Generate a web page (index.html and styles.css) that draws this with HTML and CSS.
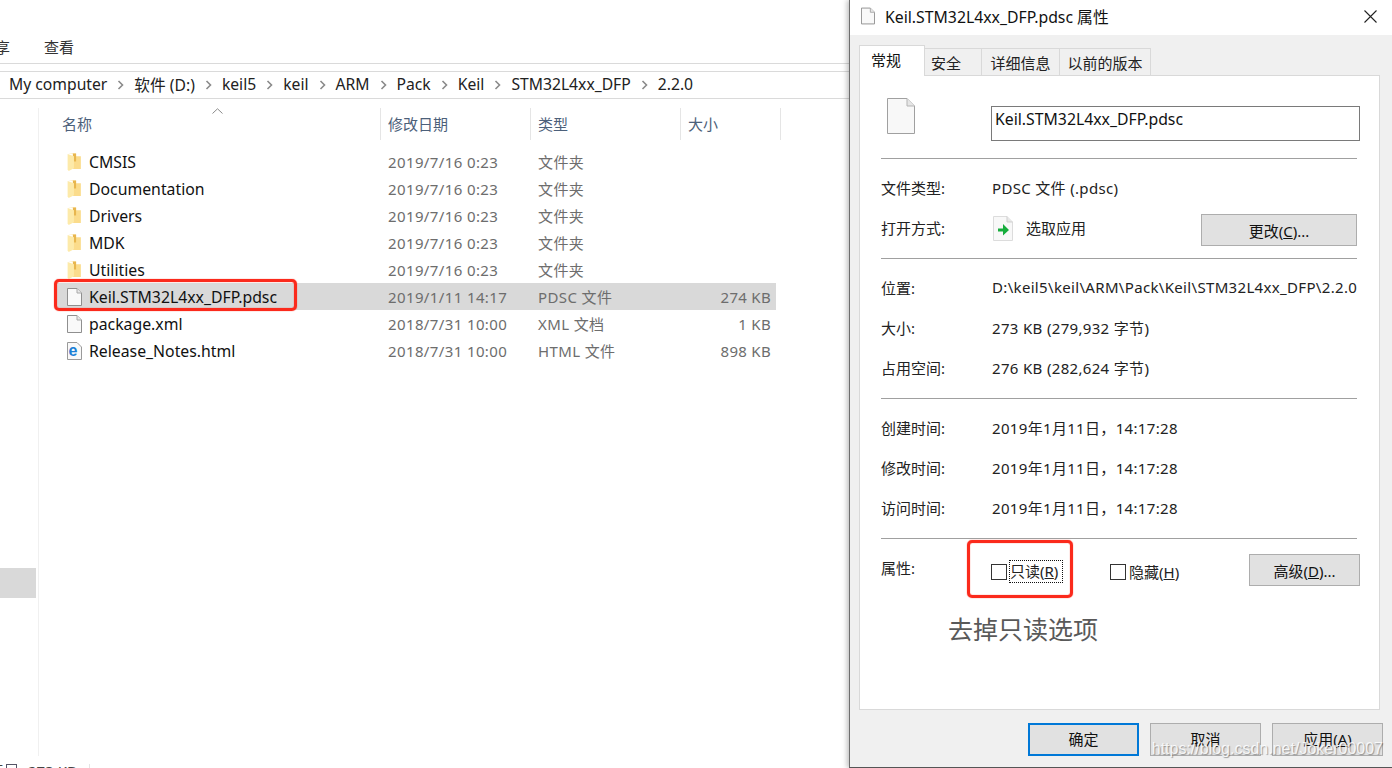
FILE: index.html
```html
<!DOCTYPE html>
<html lang="zh-CN">
<head>
    <meta charset="UTF-8">
    <title>Keil.STM32L4xx_DFP.pdsc 属性</title>
    <link rel="stylesheet" href="styles.css">
</head>
<body>

    <svg class="defs" width="0" height="0">
        <defs>
            <symbol id="folder" viewBox="0 0 13 17">
                <path d="M0.5 0.5 H8 V3 H12.5 V15 H5 V1 Z" fill="#fbdc8c"/>
                <path d="M5 0.5 H8 V8 H5 Z" fill="#e8b64e"/>
                <path d="M0 1 L6 3 V14.5 L1 17 L0 15.5 Z" fill="#fdeaa9"/>
            </symbol>
            <symbol id="page" viewBox="0 0 15 18">
                <path d="M0.5 0.5 H10 L14.5 5 V17.5 H0.5 Z" fill="#f9f9f9" stroke="#8f8f8f"/>
                <path d="M10 0.5 V5 H14.5" fill="#e8e8e8" stroke="#a8a8a8"/>
            </symbol>
            <symbol id="crumb" viewBox="0 0 7 10">
                <path d="M1.5 1 L5.5 5 L1.5 9" fill="none" stroke="#8a8a8a" stroke-width="1.6"/>
            </symbol>
        </defs>
    </svg>

    <div class="desktop">

        <!-- Explorer window -->
        <div class="explorer">
            <div class="ribbon">
                <span class="ribbon-tab ribbon-cut">享</span>
                <span class="ribbon-tab">查看</span>
            </div>

            <div class="address">
                <span>My computer</span>
                <svg class="crumb"><use href="#crumb"/></svg>
                <span>软件 (D:)</span>
                <svg class="crumb"><use href="#crumb"/></svg>
                <span>keil5</span>
                <svg class="crumb"><use href="#crumb"/></svg>
                <span>keil</span>
                <svg class="crumb"><use href="#crumb"/></svg>
                <span>ARM</span>
                <svg class="crumb"><use href="#crumb"/></svg>
                <span>Pack</span>
                <svg class="crumb"><use href="#crumb"/></svg>
                <span>Keil</span>
                <svg class="crumb"><use href="#crumb"/></svg>
                <span>STM32L4xx_DFP</span>
                <svg class="crumb"><use href="#crumb"/></svg>
                <span>2.2.0</span>
            </div>

            <div class="browser">
                <div class="nav-pane">
                    <div class="nav-selected"></div>
                </div>

                <div class="files">
                    <div class="file-head">
                        <div class="head-cell head-name">名称
                            <svg class="sort-caret" width="11" height="6" viewBox="0 0 11 6"><path d="M0.5 5.5 L5.5 0.8 L10.5 5.5" fill="none" stroke="#8a8a8a"/></svg>
                        </div>
                        <div class="head-cell">修改日期</div>
                        <div class="head-cell">类型</div>
                        <div class="head-cell head-size">大小</div>
                    </div>

                    <div class="file-list">
                        <div class="file-row">
                            <svg class="file-icon"><use href="#folder"/></svg>
                            <span class="file-name">CMSIS</span><span class="file-meta">2019/7/16 0:23</span><span class="file-meta">文件夹</span><span class="file-size"></span>
                        </div>
                        <div class="file-row">
                            <svg class="file-icon"><use href="#folder"/></svg>
                            <span class="file-name">Documentation</span><span class="file-meta">2019/7/16 0:23</span><span class="file-meta">文件夹</span><span class="file-size"></span>
                        </div>
                        <div class="file-row">
                            <svg class="file-icon"><use href="#folder"/></svg>
                            <span class="file-name">Drivers</span><span class="file-meta">2019/7/16 0:23</span><span class="file-meta">文件夹</span><span class="file-size"></span>
                        </div>
                        <div class="file-row">
                            <svg class="file-icon"><use href="#folder"/></svg>
                            <span class="file-name">MDK</span><span class="file-meta">2019/7/16 0:23</span><span class="file-meta">文件夹</span><span class="file-size"></span>
                        </div>
                        <div class="file-row">
                            <svg class="file-icon"><use href="#folder"/></svg>
                            <span class="file-name">Utilities</span><span class="file-meta">2019/7/16 0:23</span><span class="file-meta">文件夹</span><span class="file-size"></span>
                        </div>
                        <div class="file-row selected">
                            <svg class="file-icon"><use href="#page"/></svg>
                            <span class="file-name">Keil.STM32L4xx_DFP.pdsc</span><span class="file-meta">2019/1/11 14:17</span><span class="file-meta">PDSC 文件</span><span class="file-size">274 KB</span>
                        </div>
                        <div class="file-row">
                            <svg class="file-icon"><use href="#page"/></svg>
                            <span class="file-name">package.xml</span><span class="file-meta">2018/7/31 10:00</span><span class="file-meta">XML 文档</span><span class="file-size">1 KB</span>
                        </div>
                        <div class="file-row">
                            <svg class="file-icon" viewBox="0 0 15 18">
                                <path d="M0.5 0.5 H10 L14.5 5 V17.5 H0.5 Z" fill="#f9f9f9" stroke="#9a9a9a"/>
                                <text x="1.5" y="14" class="ie-glyph">e</text>
                            </svg>
                            <span class="file-name">Release_Notes.html</span><span class="file-meta">2018/7/31 10:00</span><span class="file-meta">HTML 文件</span><span class="file-size">898 KB</span>
                        </div>
                    </div>
                </div>
            </div>

            <div class="status-bar">
                <span class="status-cut">项</span>
                <span class="status-box"></span>
                <span class="status-size">273 KB</span>
            </div>

            <div class="red-frame frame-file"></div>
        </div>

        <!-- Properties dialog -->
        <div class="dialog">
            <div class="title-bar">
                <svg class="title-icon"><use href="#page"/></svg>
                <span class="title-text">Keil.STM32L4xx_DFP.pdsc 属性</span>
                <svg class="close-x" width="13" height="13" viewBox="0 0 13 13"><path d="M0.5 0.5 L12.5 12.5 M12.5 0.5 L0.5 12.5" stroke="#222" stroke-width="1.1"/></svg>
            </div>

            <div class="dialog-body">
                <div class="tabs">
                    <div class="tab active">常规</div>
                    <div class="tab tab-safe">安全</div>
                    <div class="tab tab-detail">详细信息</div>
                    <div class="tab tab-prev">以前的版本</div>
                </div>

                <div class="panel">
                    <div class="name-block">
                        <svg class="big-page" viewBox="0 0 28 36"><path d="M0.5 0.5 H20 L27.5 8 V35.5 H0.5 Z" fill="#f8f8f8" stroke="#a0a0a0"/><path d="M20 0.5 V8 H27.5" fill="#e6e6e6" stroke="#b4b4b4"/></svg>
                        <div class="name-input">Keil.STM32L4xx_DFP.pdsc</div>
                    </div>

                    <div class="prop-section">
                        <div class="prop-row"><span>文件类型:</span><span class="prop-value">PDSC 文件 (.pdsc)</span></div>
                        <div class="prop-row">
                            <span>打开方式:</span>
                            <div class="open-with">
                                <svg class="open-icon" width="20" height="25" viewBox="0 0 20 25">
                                    <path d="M0.5 0.5 H14 L19.5 6 V24.5 H0.5 Z" fill="#f8f8f8" stroke="#dcdcdc"/>
                                    <path d="M14 0.5 V6 H19.5" fill="#e8e8e8" stroke="#cfcfcf"/>
                                    <path d="M5 12.5 H10 V8 L16 14 L10 19.5 V15.5 H5 Z" fill="#16ad3c"/>
                                </svg>
                                <span>选取应用</span>
                                <button class="win-btn change-btn">更改(<u>C</u>)...</button>
                            </div>
                        </div>
                    </div>

                    <div class="prop-section">
                        <div class="prop-row"><span>位置:</span><span class="prop-value">D:\keil5\keil\ARM\Pack\Keil\STM32L4xx_DFP\2.2.0</span></div>
                        <div class="prop-row"><span>大小:</span><span class="prop-value">273 KB (279,932 字节)</span></div>
                        <div class="prop-row"><span>占用空间:</span><span class="prop-value">276 KB (282,624 字节)</span></div>
                    </div>

                    <div class="prop-section">
                        <div class="prop-row"><span>创建时间:</span><span class="prop-value">2019年1月11日，14:17:28</span></div>
                        <div class="prop-row"><span>修改时间:</span><span class="prop-value">2019年1月11日，14:17:28</span></div>
                        <div class="prop-row"><span>访问时间:</span><span class="prop-value">2019年1月11日，14:17:28</span></div>
                    </div>

                    <div class="attr-section">
                        <span class="attr-label">属性:</span>
                        <span class="check-box first-check"></span>
                        <span class="check-text focused">只读(<u>R</u>)</span>
                        <span class="check-box second-check"></span>
                        <span class="check-text">隐藏(<u>H</u>)</span>
                        <button class="win-btn advanced-btn">高级(<u>D</u>)...</button>
                    </div>

                    <div class="note">去掉只读选项</div>
                </div>

                <div class="dialog-actions">
                    <button class="win-btn action-btn default-btn">确定</button>
                    <button class="win-btn action-btn">取消</button>
                    <button class="win-btn action-btn">应用(<u>A</u>)</button>
                </div>
            </div>

            <div class="red-frame frame-check"></div>
            <div class="watermark">https://blog.csdn.net/Joker00007</div>
        </div>
    </div>

</body>
</html>
```

FILE: styles.css
```css
* {
    box-sizing: border-box;
}

body {
    margin: 0;
    width: 1392px;
    height: 768px;
    overflow: hidden;
    background: #fff;
    font-family: "Noto Sans", "Noto Sans CJK SC", sans-serif;
    font-size: 15px;
    color: #1a1a1a;
}

.defs {
    position: absolute;
}

.desktop {
    display: flex;
    height: 768px;
}

/* Explorer */
.explorer {
    position: relative;
    width: 849px;
    height: 768px;
    overflow: hidden;
    flex: none;
}

.ribbon {
    display: flex;
    height: 64px;
    padding-top: 36px;
    border-bottom: 1px solid #dadada;
    line-height: 22px;
}

.ribbon-tab {
    font-size: 15px;
    color: #333;
}

.ribbon-cut {
    width: 49px;
    margin-left: -5px;
    padding-right: 5px;
}

.address {
    display: flex;
    align-items: center;
    height: 28px;
    margin-top: 7px;
    padding: 0 0 2px 9px;
    border-top: 1px solid #dadada;
    border-bottom: 1px solid #dadada;
    font-size: 15.7px;
    color: #222;
    white-space: nowrap;
}

.crumb {
    width: 7px;
    height: 10px;
    margin: 2px 10px 0;
    flex: none;
}

.browser {
    display: flex;
    height: 657px;
    padding-top: 9px;
}

.nav-pane {
    width: 39px;
    padding-top: 460px;
    border-right: 1px solid #f0f0f0;
    flex: none;
}

.nav-selected {
    width: 36px;
    height: 30px;
    background: #d9d9d9;
}

.files {
    padding-left: 16px;
}

.file-head {
    display: flex;
    height: 32px;
    margin-bottom: 8px;
}

.head-cell {
    position: relative;
    width: 150px;
    padding: 5px 0 0 7px;
    border-right: 1px solid #e5e5e5;
    font-size: 15px;
    color: #4c607a;
}

.head-name {
    width: 326px;
}

.head-size {
    width: 100px;
}

.sort-caret {
    position: absolute;
    left: 157px;
    top: 0;
}

.file-row {
    display: grid;
    grid-template-columns: 22px 299px 150px 150px 83px;
    align-items: center;
    width: 719px;
    height: 27px;
    margin-left: 2px;
    padding-left: 10px;
}

.file-row.selected {
    background: #d9d9d9;
}

.file-icon {
    width: 15px;
    height: 18px;
}

.file-name {
    font-size: 15.8px;
    color: #111;
    white-space: nowrap;
}

.file-meta {
    letter-spacing: 0.38px;
    color: #6d6d6d;
    white-space: nowrap;
}

.file-size {
    letter-spacing: 0.3px;
    color: #6d6d6d;
    text-align: right;
    white-space: nowrap;
}

.ie-glyph {
    font-family: "Liberation Sans", sans-serif;
    font-size: 16px;
    font-weight: bold;
    fill: #1a7fd6;
}

.status-bar {
    display: flex;
    align-items: flex-start;
    height: 12px;
    padding-top: 8px;
    font-size: 15px;
    line-height: 14px;
    color: #444;
}

.status-cut {
    width: 3px;
    margin-right: 3px;
    overflow: hidden;
    direction: rtl;
}

.status-box {
    width: 11px;
    height: 11px;
    border: 1px solid #556;
}

.status-size {
    margin-left: 11px;
    padding-right: 12px;
    border-right: 1px solid #e5e5e5;
}

.red-frame {
    position: absolute;
    border: 3px solid #fb2a1c;
    border-radius: 5px;
    box-shadow: 0 0 1px #fb2a1c, inset 0 0 1px #fb2a1c;
}

.frame-file {
    left: 54px;
    top: 279px;
    width: 243px;
    height: 32px;
}

/* Properties dialog */
.dialog {
    position: relative;
    width: 543px;
    height: 768px;
    flex: none;
    border-left: 1px solid #6e6e6e;
    border-bottom: 1px solid #555;
    box-shadow: -2px 0 5px rgba(0, 0, 0, 0.25);
}

.title-bar {
    display: flex;
    align-items: center;
    height: 35px;
    padding: 0 15px 3px 11px;
    background: #fff;
}

.title-icon {
    width: 14px;
    height: 18px;
    flex: none;
}

.title-text {
    margin-left: 10px;
    flex: 1;
    font-size: 15.8px;
    color: #111;
    white-space: nowrap;
}

.close-x {
    flex: none;
}

.dialog-body {
    height: 732px;
    padding: 10px 12px 0 9px;
    background: #f0f0f0;
}

.tabs {
    display: flex;
    align-items: flex-end;
    height: 30px;
}

.tab {
    height: 27px;
    border: 1px solid #d9d9d9;
    border-bottom: none;
    border-left: none;
    text-align: center;
    line-height: 29px;
    color: #222;
}

.tab.active {
    position: relative;
    z-index: 1;
    width: 66px;
    height: 31px;
    margin-bottom: -1px;
    padding-left: 11px;
    border-left: 1px solid #d9d9d9;
    background: #fff;
    text-align: left;
    line-height: 28px;
    color: #111;
}

.tab-safe {
    width: 57px;
    padding-left: 6px;
    text-align: left;
}

.tab-detail {
    width: 78px;
}

.tab-prev {
    width: 91px;
}

.panel {
    height: 635px;
    padding: 0 22px 0 21px;
    border: 1px solid #d9d9d9;
    background: #fff;
}

.name-block {
    display: flex;
    align-items: flex-start;
    height: 83px;
    border-bottom: 1px solid #a0a0a0;
    padding-top: 22px;
}

.big-page {
    width: 28px;
    height: 36px;
    margin-left: 6px;
    flex: none;
}

.name-input {
    width: 369px;
    height: 35px;
    margin: 8px 0 0 76px;
    padding-left: 3px;
    border: 1px solid #7a7a7a;
    font-size: 15.8px;
    line-height: 25px;
    color: #111;
    flex: none;
}

.prop-section {
    padding: 8px 0 11px;
    border-bottom: 1px solid #a0a0a0;
}

.prop-row {
    display: grid;
    grid-template-columns: 111px 1fr;
    align-items: center;
    height: 40px;
    color: #222;
    white-space: nowrap;
}

.prop-value {
    letter-spacing: 0.33px;
}

.open-with {
    display: flex;
    align-items: center;
}

.open-icon {
    margin: 3px 13px 0 1px;
    flex: none;
}

.win-btn {
    height: 32px;
    padding: 0;
    border: 1px solid #adadad;
    background: #e1e1e1;
    font-family: inherit;
    font-size: 15px;
    color: #111;
}

.change-btn {
    width: 156px;
    margin: 6px 0 0 auto;
}

.attr-section {
    display: flex;
    align-items: center;
    height: 50px;
    padding-top: 16px;
    color: #222;
}

.attr-label {
    width: 110px;
    margin-top: -10px;
    flex: none;
}

.check-box {
    width: 16px;
    height: 16px;
    border: 1px solid #333;
    background: #fff;
    flex: none;
}

.check-text {
    margin: -2px 0 0 3px;
    white-space: nowrap;
}

.focused {
    width: 52px;
    outline: 1px dotted #111;
    line-height: 21px;
}

.second-check {
    margin-left: 48px;
}

.advanced-btn {
    width: 111px;
    margin: -4px -3px 0 auto;
    flex: none;
}

.note {
    margin: 23px 0 0 67px;
    font-size: 25px;
    line-height: 34px;
    color: #595959;
}

.dialog-actions {
    display: flex;
    justify-content: flex-end;
    gap: 11px;
    margin: 13px -3px 0 0;
}

.action-btn {
    width: 111px;
    height: 33px;
    padding-bottom: 3px;
}

.default-btn {
    border: 2px solid #0078d7;
}

.frame-check {
    left: 117px;
    top: 540px;
    width: 106px;
    height: 58px;
}

.watermark {
    position: absolute;
    right: 9px;
    top: 739px;
    font-family: "Liberation Sans", sans-serif;
    font-size: 16px;
    line-height: 20px;
    white-space: nowrap;
    color: rgba(255, 255, 255, 0.85);
    text-shadow: 1px 1px 1px rgba(0, 0, 0, 0.35);
}
```
